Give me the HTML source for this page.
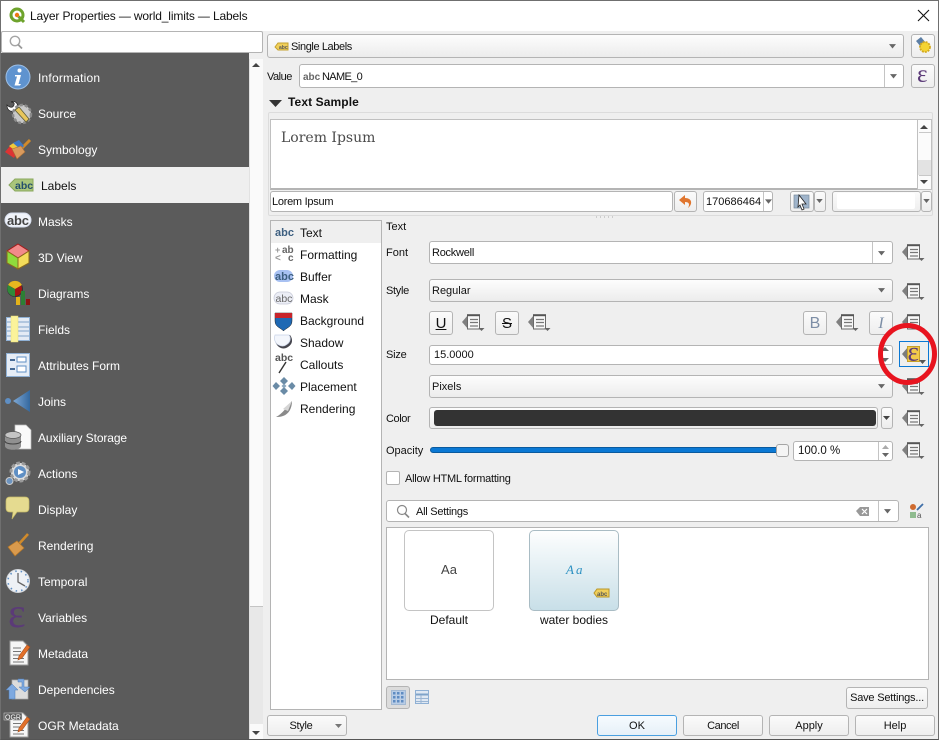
<!DOCTYPE html>
<html><head><meta charset="utf-8"><title>Layer Properties</title>
<style>
html,body{margin:0;padding:0;background:#efefef}
body{width:939px;height:740px;position:relative;overflow:hidden;font:12px/16px "Liberation Sans",sans-serif;color:#111}
div{position:absolute;box-sizing:border-box}
.t{white-space:nowrap;height:16px}
.w{color:#fff}
.f{font-size:11px;letter-spacing:-.25px}
.n{font-size:11px;letter-spacing:0}
.c{border:1px solid #b4b4b4;border-radius:3px;background:linear-gradient(#fdfdfd,#ececec)}
.i{border:1px solid #b4b4b4;border-radius:3px;background:#fff}
.b{border:1px solid #b4b4b4;border-radius:3px;background:linear-gradient(#fbfbfb,#eeeeee);text-align:center;line-height:20px;font-size:11px;white-space:nowrap}
.s{width:1px;background:#c4c4c4}
svg{position:absolute;left:0;top:0}
</style></head><body>
<div style="left:0;top:0;width:939px;height:740px;border:1px solid #6f6f6f;border-bottom:1px solid #555"></div>
<div style="left:1px;top:1px;width:937px;height:30px;background:#fff"></div>
<div class="t" style="left:30px;top:8px;color:#111;letter-spacing:-.15px">Layer Properties — world_limits — Labels</div>

<div style="left:1px;top:31px;width:262px;height:22px;background:#fff;border:1px solid #b4b4b4;border-radius:2px"></div>
<div style="left:1px;top:53px;width:248px;height:686px;background:#5b5b5b"></div>
<div style="left:1px;top:167px;width:248px;height:36px;background:#efefef"></div>
<div style="left:249px;top:59px;width:14px;height:680px;background:#fafafa;border-left:1px solid #e2e2e2"></div>
<div style="left:250px;top:606px;width:13px;height:118px;background:#e8e8e8;border-top:1px solid #c4c4c4"></div>

<div class="t w" style="left:38px;top:70px;letter-spacing:.2px">Information</div>
<div class="t w" style="left:38px;top:106px">Source</div>
<div class="t w" style="left:38px;top:142px">Symbology</div>
<div class="t" style="left:41px;top:178px">Labels</div>
<div class="t w" style="left:38px;top:214px">Masks</div>
<div class="t w" style="left:38px;top:250px">3D View</div>
<div class="t w" style="left:38px;top:286px">Diagrams</div>
<div class="t w" style="left:38px;top:322px">Fields</div>
<div class="t w" style="left:38px;top:358px">Attributes Form</div>
<div class="t w" style="left:38px;top:394px">Joins</div>
<div class="t w" style="left:38px;top:430px;letter-spacing:-.1px">Auxiliary Storage</div>
<div class="t w" style="left:38px;top:466px">Actions</div>
<div class="t w" style="left:38px;top:502px">Display</div>
<div class="t w" style="left:38px;top:538px">Rendering</div>
<div class="t w" style="left:38px;top:574px">Temporal</div>
<div class="t w" style="left:38px;top:610px">Variables</div>
<div class="t w" style="left:38px;top:646px">Metadata</div>
<div class="t w" style="left:38px;top:682px">Dependencies</div>
<div class="t w" style="left:38px;top:718px">OGR Metadata</div>

<!-- top right -->
<div class="c" style="left:267px;top:34px;width:637px;height:24px"></div>
<div class="t f" style="left:291px;top:39px;letter-spacing:-.4px">Single Labels</div>
<div class="b" style="left:911px;top:34px;width:24px;height:24px"></div>
<div class="t f" style="left:267px;top:69px;letter-spacing:-.5px">Value</div>
<div class="i" style="left:299px;top:64px;width:605px;height:24px"></div>
<div class="s" style="left:884px;top:65px;height:22px"></div>
<div class="t f" style="left:322px;top:69px;letter-spacing:-.65px">NAME_0</div>
<div class="b" style="left:911px;top:64px;width:24px;height:24px"></div>
<div class="t" style="left:288px;top:94px;font-weight:bold;letter-spacing:.1px">Text Sample</div>

<div style="left:268px;top:112px;width:665px;height:104px;border:1px solid #dcdcdc;border-radius:2px"></div>
<div style="left:270px;top:119px;width:648px;height:71px;background:#fff;border:1px solid #c0c0c0;border-bottom:2px solid #b4b4b4"></div>
<div style="left:917px;top:119px;width:15px;height:71px;background:#fbfbfb;border:1px solid #c0c0c0"></div>
<div style="left:918px;top:160px;width:13px;height:15px;background:#e3e3e3"></div>
<div class="t" style="left:281px;top:130px;font:14px/16px 'DejaVu Serif','Liberation Serif',serif;color:#4a4a4a">Lorem Ipsum</div>

<div class="i" style="left:270px;top:191px;width:403px;height:21px"></div>
<div class="t f" style="left:272px;top:194px;letter-spacing:-.27px">Lorem Ipsum</div>
<div class="b" style="left:674px;top:191px;width:23px;height:21px"></div>
<div class="i" style="left:703px;top:191px;width:70px;height:21px"></div>
<div class="s" style="left:763px;top:192px;height:19px"></div>
<div class="t n" style="left:706px;top:194px">170686464</div>
<div class="b" style="left:790px;top:191px;width:24px;height:21px"></div>
<div class="b" style="left:814px;top:191px;width:12px;height:21px"></div>
<div class="b" style="left:832px;top:191px;width:89px;height:21px"></div>
<div style="left:837px;top:193px;width:78px;height:16px;background:#fff;border-radius:2px"></div>
<div class="b" style="left:921px;top:191px;width:11px;height:21px"></div>

<!-- list -->
<div style="left:270px;top:220px;width:112px;height:490px;background:#fff;border:1px solid #b4b4b4"></div>
<div style="left:271px;top:221px;width:110px;height:22px;background:#efefef"></div>
<div class="t" style="left:300px;top:225px">Text</div>
<div class="t" style="left:300px;top:247px">Formatting</div>
<div class="t" style="left:300px;top:269px">Buffer</div>
<div class="t" style="left:300px;top:291px">Mask</div>
<div class="t" style="left:300px;top:313px">Background</div>
<div class="t" style="left:300px;top:335px">Shadow</div>
<div class="t" style="left:300px;top:357px">Callouts</div>
<div class="t" style="left:300px;top:379px">Placement</div>
<div class="t" style="left:300px;top:401px">Rendering</div>

<!-- form -->
<div class="t n" style="left:386px;top:219px">Text</div>
<div class="t n" style="left:386px;top:245px">Font</div>
<div class="i" style="left:429px;top:241px;width:464px;height:23px"></div>
<div class="s" style="left:872px;top:242px;height:21px"></div>
<div class="t f" style="left:432px;top:245px">Rockwell</div>
<div class="t f" style="left:386px;top:283px;letter-spacing:-.3px">Style</div>
<div class="c" style="left:429px;top:279px;width:464px;height:23px"></div>
<div class="t n" style="left:432px;top:283px">Regular</div>
<div class="b" style="left:429px;top:311px;width:24px;height:24px;font-size:15px;line-height:23px;"><span style="text-decoration:underline">U</span></div>
<div class="b" style="left:495px;top:311px;width:24px;height:24px;font-size:15px;line-height:23px;"><span style="text-decoration:line-through">S</span></div>
<div class="b" style="left:803px;top:311px;width:24px;height:24px;font-size:16px;line-height:23px;color:#7d8ea6">B</div>
<div class="b" style="left:869px;top:311px;width:24px;height:24px;font-size:16px;line-height:23px;color:#7d8ea6;font-family:'Liberation Serif',serif;font-style:italic">I</div>
<div class="t n" style="left:386px;top:347px;letter-spacing:-.2px">Size</div>
<div class="i" style="left:429px;top:345px;width:464px;height:20px"></div>
<div class="t n" style="left:434px;top:347px">15.0000</div>
<div class="c" style="left:429px;top:375px;width:464px;height:23px"></div>
<div class="t n" style="left:432px;top:379px">Pixels</div>
<div class="t f" style="left:386px;top:411px;letter-spacing:-.4px">Color</div>
<div class="c" style="left:429px;top:407px;width:449px;height:22px"></div>
<div style="left:434px;top:410px;width:442px;height:16px;background:#333;border-radius:3px"></div>
<div class="c" style="left:881px;top:407px;width:12px;height:22px"></div>
<div class="t n" style="left:386px;top:443px">Opacity</div>
<div style="left:430px;top:447px;width:350px;height:6px;background:#0a78d4;border:1px solid #0a5a9e;border-radius:3px"></div>
<div style="left:776px;top:444px;width:13px;height:13px;background:#f4f4f4;border:1px solid #a5a5a5;border-radius:3px"></div>
<div class="i" style="left:793px;top:441px;width:100px;height:20px"></div>
<div class="s" style="left:878px;top:442px;height:18px"></div>
<div class="t" style="left:798px;top:443px;font-size:11.5px">100.0 %</div>
<div style="left:386px;top:471px;width:14px;height:14px;background:#fff;border:1px solid #b4b4b4;border-radius:2px"></div>
<div class="t f" style="left:405px;top:471px">Allow HTML formatting</div>

<div class="i" style="left:386px;top:500px;width:513px;height:22px"></div>
<div class="s" style="left:878px;top:501px;height:20px"></div>
<div class="t f" style="left:416px;top:504px">All Settings</div>

<div style="left:386px;top:527px;width:543px;height:153px;background:#fff;border:1px solid #b4b4b4"></div>
<div style="left:404px;top:530px;width:90px;height:81px;background:#fff;border:1px solid #c4c4c4;border-radius:5px"></div>
<div class="t" style="left:404px;top:562px;width:90px;text-align:center;font-size:13px;color:#444">Aa</div>
<div style="left:529px;top:530px;width:90px;height:81px;background:linear-gradient(#fdfefe,#c8dfe8);border:1px solid #a9bcc4;border-radius:5px"></div>
<div class="t" style="left:566px;top:562px;font:italic 13px/16px 'Liberation Serif',serif;color:#2d91c2;letter-spacing:2px">Aa</div>
<div class="t" style="left:404px;top:612px;width:90px;text-align:center">Default</div>
<div class="t" style="left:529px;top:612px;width:90px;text-align:center">water bodies</div>

<div class="b" style="left:386px;top:686px;width:24px;height:23px;background:#dcdcdc"></div>
<div class="b" style="left:846px;top:687px;width:82px;height:22px;letter-spacing:-.2px">Save Settings...</div>

<div class="b" style="left:267px;top:715px;width:80px;height:21px;padding-right:12px;letter-spacing:-.3px">Style</div>
<div class="b" style="left:597px;top:715px;width:80px;height:21px;border-color:#4a9fe0;background:linear-gradient(#f6fbff,#e6f0f8)">OK</div>
<div class="b" style="left:683px;top:715px;width:80px;height:21px;letter-spacing:-.4px">Cancel</div>
<div class="b" style="left:769px;top:715px;width:80px;height:21px">Apply</div>
<div class="b" style="left:855px;top:715px;width:80px;height:21px">Help</div>
<div style="left:899px;top:341px;width:30px;height:26px;border:1px solid #0a78d4"></div>

<svg width="939" height="740" viewBox="0 0 939 740">
<defs>
<symbol id="dd" viewBox="0 0 23 18" width="23" height="18">
<path d="M0 8L6 1V15Z" fill="#808080"/>
<rect x="5.5" y="1" width="12" height="14" fill="#f8f8f8" stroke="#6a6a6a"/>
<path d="M5 1.200H18" stroke="#555" stroke-width="2"/>
<path d="M8 5.500H16M8 8.500H16M8 12H16" stroke="#777" stroke-width="1.200"/>
<path d="M16.500 14H22.500L19.500 17Z" fill="#666"/>
</symbol>
<symbol id="ar" viewBox="0 0 8 5" width="7" height="4.500"><path d="M0 0H8L4 5Z" fill="#666"/></symbol>
<symbol id="doc" viewBox="0 0 26 26" width="26" height="26">
<path d="M4 1H17L22 6V25H4Z" fill="#f6f6f6" stroke="#999"/>
<path d="M7 8H15M7 11.500H15M7 15H15M7 18.500H18M7 22H18" stroke="#777"/>
<path d="M13 16L21 5L24 7L16 18L12 20Z" fill="#e2702a" stroke="#a84d17" stroke-width=".6"/>
</symbol>
<linearGradient id="j" x1="0" x2="1"><stop offset="0" stop-color="#7fa9d6"/><stop offset="1" stop-color="#34689f"/></linearGradient>
</defs>

<!-- title bar -->
<circle cx="17" cy="15" r="6" fill="none" stroke="#6ea32c" stroke-width="3"/>
<path d="M18.500 16.500L24 22" stroke="#6ea32c" stroke-width="3"/>
<circle cx="17" cy="15" r="2.200" fill="#ee7913"/>
<path d="M918 10L929 21M929 10L918 21" stroke="#111" stroke-width="1.100"/>
<circle cx="15" cy="41" r="4.700" fill="none" stroke="#a5a5a5" stroke-width="1.400"/>
<path d="M18 44.500L22 48.500" stroke="#999" stroke-width="1.800"/>

<!-- scrollbar arrows -->
<path d="M252 67L256 63L260 67Z" fill="#444"/>
<path d="M252 731L256 735L260 731Z" fill="#444"/>

<!-- sidebar icons -->
<circle cx="18" cy="77" r="12" fill="#5f93cf" stroke="#9cbfe6"/>
<circle cx="19.500" cy="70.500" r="2" fill="#fff"/>
<path d="M15 75H21L18.500 84H21L20 85.500H14.500L17 76.500H15Z" fill="#fff"/>

<path d="M7 105C10 108 13 108 14 105C15 102 12 102 11 102C15 100 19 104 17 108L24 115L21 118L14 111C10 112 7 110 7 105Z" fill="#fff" stroke="#222" stroke-width=".7"/>
<circle cx="22" cy="114" r="9" fill="#c9c9c9" stroke="#8a8a8a" stroke-width="2.500" stroke-dasharray="3 2"/>
<path d="M15 110L19 107L29 119L26 122Z" fill="#e8c65b" stroke="#5d5d3a" stroke-width=".8"/>

<path d="M30 140L21 149" stroke="#d08a2b" stroke-width="3"/>
<path d="M5 152L10 146L18 150L14 158Z" fill="#d33"/>
<path d="M9 146L15 142L22 149L17 152Z" fill="#f0c93a"/>
<path d="M13 143L19 140L24 146L20 149Z" fill="#3d77c4"/>
<path d="M12 149L21 146L25 152L17 159Z" fill="#d99a5d" stroke="#a96f35" stroke-width=".6"/>

<path d="M9 185L15 179H33V191H15Z" fill="#a9c57b" stroke="#8aa85d"/>
<text x="15" y="189" font-family="Liberation Sans,sans-serif" font-weight="bold" font-size="10.500" fill="#244f6b">abc</text>

<rect x="5" y="213" width="26" height="14" rx="7" fill="#f0f3fa" stroke="#d5dcec"/>
<text x="7" y="225" font-family="Liberation Sans,sans-serif" font-weight="bold" font-size="13" fill="#444" textLength="22">abc</text>

<path d="M18 244L29 251L18 258L7 251Z" fill="#f28a8a" stroke="#a31a1a"/>
<path d="M7 251L18 258V269L7 263Z" fill="#8fdc3c" stroke="#8a6a1e"/>
<path d="M29 251L18 258V269L29 263Z" fill="#f3dc5a" stroke="#8a6a1e"/>

<circle cx="15" cy="289" r="7.500" fill="#a61414" stroke="#333"/>
<path d="M15 289L8 285A8 8 0 0 1 22 285Z" fill="#e8b71f"/>
<path d="M15 289V296.500A8 8 0 0 1 8 285Z" fill="#2f8a3a"/>
<rect x="16" y="297" width="4" height="8" fill="#e3b21a"/><rect x="21" y="291" width="4" height="14" fill="#2c7f34"/><rect x="26" y="299" width="4" height="6" fill="#8c1313"/>

<rect x="6.500" y="317.500" width="23" height="23" fill="#e4ebf5" stroke="#8fb0d4"/>
<path d="M7 322H29M7 327H29M7 331H29M7 336H29" stroke="#7fa3c9"/>
<rect x="11" y="316" width="7" height="26" fill="#fbf39a" stroke="#e6dc7b" stroke-width=".5"/>

<rect x="6.500" y="353.500" width="23" height="23" fill="#e6edf6" stroke="#8fb0d4"/>
<path d="M10 360H15M10 369H15" stroke="#466a94" stroke-width="2"/>
<rect x="17" y="357" width="9" height="5" fill="#fff" stroke="#5f8fc4"/><rect x="17" y="366" width="9" height="6" fill="#fff" stroke="#5f8fc4"/>

<circle cx="8" cy="401" r="3" fill="#5f8fc4"/>
<path d="M13 401L30 390V412Z" fill="url(#j)"/>

<path d="M15 425H26L31 430V449H15Z" fill="#fafafa" stroke="#bbb" stroke-width=".7"/>
<path d="M5 435V446C5 451 21 451 21 446V435Z" fill="#909090"/>
<ellipse cx="13" cy="435" rx="8" ry="3.500" fill="#c4c4c4" stroke="#555" stroke-width=".7"/>
<path d="M5 441C5 445 21 445 21 441" fill="none" stroke="#444"/>

<circle cx="20" cy="472" r="9" fill="#ddd" stroke="#9a9a9a" stroke-width="3" stroke-dasharray="3.500 2"/>
<circle cx="20" cy="472" r="6" fill="#5f8fc4"/><path d="M18 469L24 472L18 475Z" fill="#fff"/>
<circle cx="9.500" cy="481" r="3.500" fill="#6d94bf" stroke="#ccc"/>

<path d="M10 497H25Q29 497 29 501V508Q29 512 25 512H17L12 519L13 512H10Q6 512 6 508V501Q6 497 10 497Z" fill="#e5db90" stroke="#c5ba68" stroke-width=".7"/>

<path d="M28 534L18 545" stroke="#d08a2b" stroke-width="2.600"/>
<path d="M8 547L17 541L24 548L15 556Z" fill="#d99a4d" stroke="#b57625" stroke-width=".7"/>

<circle cx="18" cy="581" r="11.500" fill="#eef1f5" stroke="#d5d9de"/>
<circle cx="18" cy="581" r="10" fill="none" stroke="#5f8fc4" stroke-width="1.500" stroke-dasharray="1.500 4"/>
<path d="M18 573V582L25 586" fill="none" stroke="#666" stroke-width="1.300"/>

<text x="8" y="627" font-family="Liberation Serif,serif" font-size="42" fill="#5b3a78">ε</text>

<use href="#doc" x="6" y="640"/>

<path d="M12 680H28V699H12Z" fill="#dcdcdc" stroke="#aaa" stroke-width=".7"/>
<path d="M6 690L12 684L18 690H15V699H9V690Z" fill="#7ea9e0" stroke="#4d7cb8" stroke-width=".5"/>
<path d="M18 679H24V687H30L25 692L19 687H22V682H18Z" fill="#7ea9e0" stroke="#4d7cb8" stroke-width=".5"/>

<use href="#doc" x="6" y="712"/>
<rect x="4" y="713" width="18" height="7" fill="#5b5b5b" stroke="#ddd" stroke-width=".5"/>
<text x="5" y="719.500" font-family="Liberation Sans,sans-serif" font-size="7" fill="#fff">OGR</text>

<!-- single labels -->
<path d="M275 47L278 43H288V50H278Z" fill="#f0cf5a" stroke="#c5a12e"/>
<text x="279" y="49" font-family="Liberation Sans,sans-serif" font-weight="bold" font-size="5" fill="#555">abc</text>
<use href="#ar" x="889" y="44"/>
<path d="M916 41L921 37L926 43L921 47Z" fill="#5d7fa5"/>
<circle cx="925" cy="47" r="5" fill="#f4d432" stroke="#d3a91d" stroke-width="1.800" stroke-dasharray="2 1"/>
<text x="303" y="80" font-family="Liberation Sans,sans-serif" font-weight="bold" font-size="10" fill="#666">abc</text>
<use href="#ar" x="890" y="74"/>
<text x="917" y="82" font-family="Liberation Serif,serif" font-size="25" fill="#5b3a78">ε</text>
<path d="M269 100H282L275.500 107Z" fill="#333"/>

<!-- sample scrollbar -->
<path d="M920 129L924 125L928 129Z" fill="#444"/>
<path d="M920 180L924 184L928 180Z" fill="#444"/>
<path d="M919 132.500H931" stroke="#c8c8c8"/><path d="M919 175.500H931" stroke="#c8c8c8"/>

<!-- sample row icons -->
<path d="M685 195L679 200L685 205V202C689 202 690 204 688 208C693 204 692 198 685 198Z" fill="#e0762f"/>
<use href="#ar" x="765" y="199" width="7" height="5"/>
<rect x="794" y="195" width="15" height="13" fill="#9fb4cb" stroke="#7a8a9c" stroke-width=".7"/>
<path d="M799 195L806 204H802L804 209L802 210L800 205L798 207Z" fill="#fff" stroke="#222" stroke-width=".8"/>
<use href="#ar" x="816" y="199" width="7" height="4"/>
<use href="#ar" x="923" y="199" width="7" height="4"/>
<path d="M596 217h1m3 0h1m3 0h1m3 0h1m3 0h1" stroke="#aaa" fill="none"/>

<!-- properties list icons -->
<g font-family="Liberation Sans,sans-serif" font-weight="bold">
<text x="275" y="236" font-size="11" fill="#3d5f80">abc</text>
<text x="282" y="253" font-size="10" fill="#666">ab</text>
<text x="275" y="253" font-size="9" fill="#999">+</text>
<text x="275" y="261" font-size="10" fill="#999">&lt;</text>
<text x="288" y="261" font-size="10" fill="#666">c</text>
<rect x="274" y="270" width="19" height="12" rx="6" fill="#a8c1f2"/>
<text x="275" y="280" font-size="11" fill="#3d5f80">abc</text>
<rect x="274" y="292" width="19" height="12" rx="6" fill="#eceef6" stroke="#c5c8d6" stroke-width=".7"/>
<text x="275.500" y="302" font-size="10.500" fill="#666" font-weight="normal">abc</text>
<path d="M275 313H292V321C292 327 286 328 283.500 331C281 328 275 327 275 321Z" fill="#1f69b4" stroke="#222" stroke-width=".5"/>
<path d="M275 313H292V318H275Z" fill="#c8242b"/>
<path d="M276 335H290C293 339 293 344 288 347C285 349 282 349 279 347C275 344 274 339 276 335Z" fill="#46464e"/>
<path d="M275 335H289C291 338 291 342 286 345C283 347 280 346 277 344C274 341 274 338 275 335Z" fill="#f3f6fc" stroke="#c8d2e6" stroke-width=".7"/>
<text x="275" y="361" font-size="10.500" fill="#555">abc</text>
<path d="M279 373L286 362" stroke="#333" stroke-width="1.400"/>
</g>
<path d="M284 377L288 381L284 385L280 381ZM284 387L288 391L284 395L280 391ZM276 382L280 386L276 390L272.500 386ZM292 382L295.500 386L292 390L288 386Z" fill="#6a8ba6"/>
<path d="M284 383.500L286.500 386L284 388.500L281.500 386Z" fill="#8aa6bd"/>
<path d="M276 417C282 414 287 407 292 401C292 408 289 414 283 416C280 417 278 417 276 417Z" fill="#8a8a8a"/>
<path d="M283 409L292 401L288 411Z" fill="#d5d5d5"/>

<!-- combos -->
<use href="#ar" x="878" y="251"/><use href="#ar" x="878" y="288"/><use href="#ar" x="878" y="384"/>
<path d="M881 351L885 347L889 351ZM881 358L885 362L889 358Z" fill="#666"/>
<path d="M883 416H890L886.500 420Z" fill="#444"/>
<path d="M882 449L885.500 445L889 449Z" fill="#aaa"/>
<path d="M882 453L885.500 457L889 453Z" fill="#666"/>
<use href="#dd" x="902" y="244"/><use href="#dd" x="902" y="283"/>
<use href="#dd" x="462" y="314"/><use href="#dd" x="528" y="314"/><use href="#dd" x="836" y="314"/><use href="#dd" x="902" y="314"/>
<use href="#dd" x="902" y="378"/><use href="#dd" x="902" y="410"/><use href="#dd" x="902" y="442"/>

<!-- active DD -->
<path d="M902 354L908 347V361Z" fill="#7b7b7b"/>
<rect x="907.500" y="346.500" width="12" height="15" fill="#f1ca4a" stroke="#c8a12a"/>
<text x="907.500" y="360.500" font-family="Liberation Serif,serif" font-size="27" fill="#5b3a78">ε</text>
<path d="M919 360H926L922.500 364Z" fill="#555"/>
<ellipse cx="907.500" cy="354" rx="27" ry="28.500" fill="none" stroke="#e8141f" stroke-width="5"/>

<!-- search -->
<circle cx="402" cy="510" r="4.500" fill="none" stroke="#888" stroke-width="1.200"/>
<path d="M405 513.500L409 517.500" stroke="#888" stroke-width="1.600"/>
<path d="M856 511L860 507H869V516H860Z" fill="#999"/>
<path d="M862 509L867 514M867 509L862 514" stroke="#fff" stroke-width="1.200"/>
<use href="#ar" x="884" y="509"/>
<circle cx="913" cy="507" r="3" fill="#cf6b30"/>
<path d="M917 510L923 504" stroke="#3f6fa8" stroke-width="1.800"/>
<rect x="910" y="512" width="6" height="6" fill="#8fbb8f"/>
<text x="917" y="518" font-family="Liberation Sans,sans-serif" font-size="8" fill="#555">a</text>
<path d="M594 593L597 589H609V597H597Z" fill="#f0cf5a" stroke="#b9962a"/>
<text x="597" y="596" font-family="Liberation Sans,sans-serif" font-weight="bold" font-size="6" fill="#555">abc</text>

<!-- view buttons -->
<rect x="391.500" y="690.500" width="14" height="14" fill="#b9cde6" stroke="#a3b9d3"/>
<path d="M393 692h2.500v2.500h-2.500zM397 692h2.500v2.500h-2.500zM401 692h2.500v2.500h-2.500zM393 696h2.500v2.500h-2.500zM397 696h2.500v2.500h-2.500zM401 696h2.500v2.500h-2.500zM393 700h2.500v2.500h-2.500zM397 700h2.500v2.500h-2.500zM401 700h2.500v2.500h-2.500z" fill="#5f8cc2"/>
<rect x="415.500" y="690.500" width="13" height="13" fill="#dfe8f3" stroke="#8fb0d4"/>
<path d="M416 694.500H428" stroke="#7fa3c9" stroke-width="2"/>
<path d="M416 698.500H428M416 701.500H428M421 695V703" stroke="#9ab5d3"/>
<path d="M335 724H342L338.500 728Z" fill="#777"/>
</svg>
</body></html>
